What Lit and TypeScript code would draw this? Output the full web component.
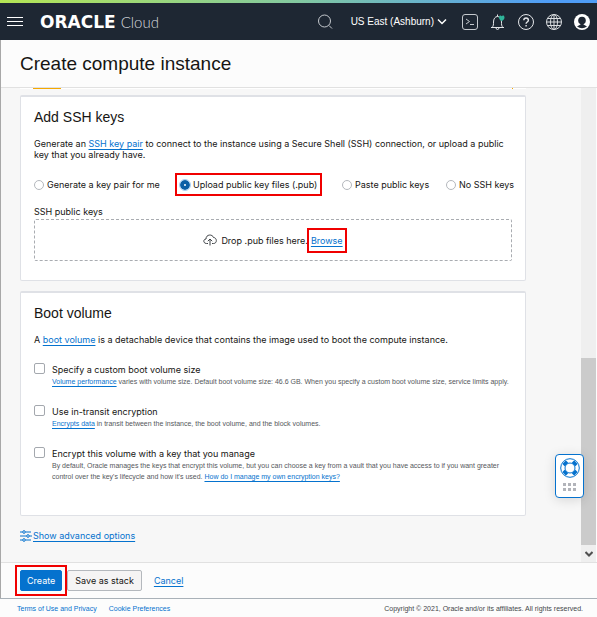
import { LitElement, html, css, svg } from "lit";
import { customElement, state } from "lit/decorators.js";

const spokes = [45, 135, 225, 315];
const dots = [0, 1, 2, 3, 4, 5];

@customElement("app-root")
export class AppRoot extends LitElement {
  @state() private source = "upload";

  static styles = css`
    :host {
      --ink: #161513;
      --link: #0572ce;
      --line: #dfe1e6;
      display: flex;
      flex-direction: column;
      min-height: 100vh;
      background: #fcfcfc;
      color: var(--ink);
      font: 9px/11px Inter, "Liberation Sans", Arial, sans-serif;
    }
    * { box-sizing: border-box; }
    h1, h2, p { margin: 0; font-weight: 400; }
    h1, h2 { font-family: "Liberation Sans", Arial, sans-serif; }
    svg { display: block; fill: none; }
    a { color: var(--link); text-decoration: underline; text-underline-offset: 2px; }
    button { font: inherit; cursor: pointer; }
    .rainbow { height: 3px; background: linear-gradient(90deg, #b5e655, #82c8a0 50%, #4f9df7 92%); }
    .top {
      display: flex;
      align-items: center;
      height: 37px;
      padding: 0 7px;
      background: #1e2733;
      color: #fff;
    }
    .bare { display: block; padding: 0; border: 0; background: none; color: inherit; }
    .brand { display: flex; align-items: center; margin-left: 17px; color: #fff; text-decoration: none; }
    .oracle { font: 700 17px/20px "DejaVu Sans", sans-serif; }
    .cloud { margin-left: 5px; font: 300 15px/20px Lato, sans-serif; color: #d5d8dc; }
    .tools { display: flex; align-items: center; gap: 12px; margin-left: auto; }
    .region {
      display: flex;
      align-items: center;
      gap: 3px;
      margin: 0 3px 0 6px;
      font: 10px/12px "Liberation Sans", Arial, sans-serif;
    }
    .page { display: flex; flex: 1; flex-direction: column; border-left: 1px solid #a8a8a8; }
    .title { padding: 12px 19px; border-bottom: 1px solid #e1e1e1; font-size: 19px; line-height: 23px; }
    .main { position: relative; display: grid; grid-template-columns: minmax(0, 1fr) 16px; flex: 1; background: #f7f7f7; }
    .content { padding: 0 55px 16px 19px; }
    .previous { display: flex; justify-content: space-between; height: 1px; padding: 0 13px; background: #fff; }
    .previous-left { width: 28px; background: #f5a800; }
    .previous-right { width: 1px; background: #f5a800; }
    .card {
      margin-top: 6px;
      padding: 11px 13px 19px;
      border: 1px solid var(--line);
      border-top-width: 2px;
      border-radius: 2px;
      background: #fff;
    }
    .card + .card { margin-top: 10px; padding-bottom: 33px; }
    h2 { margin-bottom: 12px; font-size: 14px; line-height: 18px; }
    .sources {
      display: grid;
      grid-template-columns: 146px 162px 104px auto;
      margin: 18px 0 15px;
      padding: 0;
      border: 0;
    }
    .source { display: flex; align-items: center; justify-self: start; gap: 3px; height: 13px; white-space: nowrap; }
    .marked { outline: 2px solid #f00000; }
    .source.marked { outline-offset: 3px; }
    input { appearance: none; margin: 0; flex: none; background: #fff; }
    input[type="radio"] { width: 10px; height: 10px; border: 1px solid #b4b8bd; border-radius: 50%; }
    input[type="radio"]:checked { border: 4px solid #0b5fa5; outline: 1px solid #a5cdf0; }
    .drop {
      display: flex;
      align-items: center;
      justify-content: center;
      height: 42px;
      margin-top: 2px;
      border: 1px dashed #a9acb1;
      border-radius: 2px;
    }
    .cloud-icon { margin-right: 4px; }
    .browse { margin-left: 3px; outline-offset: 2px; padding: 3px 0; }
    .option { display: grid; grid-template-columns: 11px 1fr; column-gap: 7px; margin-top: 18px; }
    .option label { line-height: 13px; }
    input[type="checkbox"] { width: 11px; height: 11px; border: 1px solid #a4a8ae; border-radius: 2px; }
    .hint { grid-column: 2; color: #55585c; font: 7px/11px "Liberation Sans", Arial, sans-serif; }
    .hint.long { white-space: nowrap; }
    .advanced { display: flex; align-items: center; gap: 1px; width: fit-content; margin-top: 14px; line-height: 12px; }
    .scroll { display: flex; flex-direction: column; border-right: 1px solid #fcfcfc; background: #efefef; }
    .track { flex: 270; }
    .thumb { flex: 187; background: #cbcbcb; }
    .arrow { display: grid; place-items: center; height: 17px; }
    .help {
      position: absolute;
      right: 13px;
      bottom: 64px;
      display: flex;
      flex-direction: column;
      align-items: center;
      gap: 5px;
      width: 29px;
      height: 44px;
      padding: 3px 0;
      border: 1px solid var(--link);
      border-radius: 4px;
      background: #fff;
      box-shadow: 0 2px 12px #0002;
    }
    .help-dots { fill: #b2b4ba; }
    .actions { display: flex; align-items: center; gap: 5px; padding: 7px 19px; border-top: 1px solid #e1e1e1; }
    .button { height: 21px; padding: 0 7px; border: 1px solid #b4b8bd; border-radius: 2px; background: #f5f4f4; color: var(--ink); }
    .primary { padding: 0 6px; border-color: var(--link); background: var(--link); color: #fff; }
    .step { display: flex; outline-offset: 3px; }
    .actions a { margin-left: 7px; }
    footer {
      display: flex;
      gap: 12px;
      padding: 4px 14px 3px 17px;
      border-top: 1px solid #a9b1b8;
      color: #44474a;
      font: 7px/11px "Liberation Sans", Arial, sans-serif;
    }
    footer a { text-decoration: none; }
    footer span { margin-left: auto; }
  `;

  private radio(id: string, label: string) {
    return html`<label class="source ${id === "upload" ? "marked" : ""}">
      <input type="radio" name="source" .checked=${this.source === id} @change=${() => (this.source = id)} />${label}
    </label>`;
  }

  render() {
    return html`
      <div class="rainbow"></div>
      <header class="top">
        <button class="bare" aria-label="Menu">
          <svg width="16" height="16" stroke="#fff"><path d="M0 3.500h16M0 7.500h16M0 11.500h16" /></svg>
        </button>
        <a class="brand" href="#home"><span class="oracle">ORACLE</span><span class="cloud">Cloud</span></a>
        <div class="tools">
          <button class="bare" aria-label="Search">
            <svg width="16" height="16" stroke="#c5c9ce"><circle cx="7.500" cy="7" r="6" /><path d="m12 11.500 3 3" /></svg>
          </button>
          <button class="bare region">
            US East (Ashburn)
            <svg width="10" height="8" stroke="#fff" stroke-width="1.500"><path d="m1 1.500 4 4 4-4" /></svg>
          </button>
          <button class="bare" aria-label="Cloud Shell">
            <svg width="16" height="16" stroke="#c5c9ce"><rect x=".5" y=".5" width="15" height="15" rx="2.500" /><path d="m4 5 3.500 2.500L4 10M8 10.500h4" /></svg>
          </button>
          <button class="bare" aria-label="Announcements">
            <svg width="16" height="16" stroke="#e4e6e9">
              <path d="M1 13.500h13M2 13.500c1.500-1.500 1.500-3 1.500-5.500 0-3 1.500-5.500 4-5.500s4 2.500 4 5.500c0 2.500 0 4 1.500 5.500M7.500 2.500V.5M6 14c0 2 3 2 3 0" />
              <path d="M9 3.500c0-2.500 2-2.500 2.700-1.300.7-1.200 2.800-1.200 2.800 1.300 0 1.500-1 2.500-2.700 3.800-1.800-1.300-2.800-2.300-2.800-3.800z" fill="#2fb59a" stroke="none" />
            </svg>
          </button>
          <button class="bare" aria-label="Help">
            <svg width="16" height="16" stroke="#e4e6e9"><circle cx="8" cy="8" r="7.500" /><path d="M5.800 6.300c0-3 4.600-3 4.600 0 0 1.700-2.300 1.700-2.300 3.400M8.100 11v1.500" stroke-width="1.400" /></svg>
          </button>
          <button class="bare" aria-label="Language">
            <svg width="16" height="16" stroke="#d9dcdf"><circle cx="8" cy="8" r="7.500" /><ellipse cx="8" cy="8" rx="3.500" ry="7.500" /><path d="M8 .5v15M.5 8h15M2 4.500h12M2 11.500h12" /></svg>
          </button>
          <button class="bare" aria-label="Profile">
            <svg width="16" height="16"><circle cx="8" cy="8" r="8" fill="#fff" /><circle cx="8" cy="6.500" r="3.800" fill="#1e2733" /><path d="M6.500 9h3v1.500l3.500 2q-5 3.500-10 0l3.500-2z" fill="#1e2733" /></svg>
          </button>
        </div>
      </header>

      <div class="page">
        <h1 class="title">Create compute instance</h1>
        <main class="main">
          <div class="content">
            <div class="previous"><span class="previous-left"></span><span class="previous-right"></span></div>
            <section class="card">
              <h2>Add SSH keys</h2>
              <p>Generate an <a href="#pair">SSH key pair</a> to connect to the instance using a Secure Shell (SSH) connection, or upload a public key that you already have.</p>
              <fieldset class="sources" aria-label="Key source">
                ${this.radio("generate", "Generate a key pair for me")}
                ${this.radio("upload", "Upload public key files (.pub)")}
                ${this.radio("paste", "Paste public keys")}
                ${this.radio("none", "No SSH keys")}
              </fieldset>
              <p>SSH public keys</p>
              <div class="drop">
                <svg class="cloud-icon" width="14" height="12" stroke="#3f4347">
                  <path d="M5 9.500H3.500C0 9.500 0 5 3 5c0-5 6.500-5 7.500-1.500 3.500 0 4 6 0 6H9M7 11.500V5M4.800 7.200 7 5l2.200 2.200" />
                </svg>
                <span>Drop .pub files here.</span>
                <a class="browse marked" href="#browse">Browse</a>
              </div>
            </section>

            <section class="card">
              <h2>Boot volume</h2>
              <p>A <a href="#boot">boot volume</a> is a detachable device that contains the image used to boot the compute instance.</p>
              <div class="option">
                <input type="checkbox" id="size" /><label for="size">Specify a custom boot volume size</label>
                <p class="hint long"><a href="#performance">Volume performance</a> varies with volume size. Default boot volume size: 46.6 GB. When you specify a custom boot volume size, service limits apply.</p>
              </div>
              <div class="option">
                <input type="checkbox" id="transit" /><label for="transit">Use in-transit encryption</label>
                <p class="hint"><a href="#encrypts">Encrypts data</a> in transit between the instance, the boot volume, and the block volumes.</p>
              </div>
              <div class="option">
                <input type="checkbox" id="key" /><label for="key">Encrypt this volume with a key that you manage</label>
                <p class="hint">By default, Oracle manages the keys that encrypt this volume, but you can choose a key from a vault that you have access to if you want greater control over the key's lifecycle and how it's used. <a href="#manage">How do I manage my own encryption keys?</a></p>
              </div>
            </section>
            <a class="advanced" href="#advanced">
              <svg width="12" height="12" stroke="#0572ce">
                <path d="M0 2h2.500M5.500 2H11M0 6h6.500M9.500 6H12M0 10h2.500M5.500 10H11" />
                <circle cx="4" cy="2" r="1.300" /><circle cx="8" cy="6" r="1.300" /><circle cx="4" cy="10" r="1.300" />
              </svg>
              <span>Show advanced options</span>
            </a>
          </div>
          <div class="scroll">
            <div class="track"></div>
            <div class="thumb"></div>
            <div class="arrow"><svg width="8" height="6" stroke="#505050" stroke-width="2"><path d="m.5 1 3.500 3.500L7.500 1" /></svg></div>
          </div>
          <button class="help" aria-label="Support">
            <svg width="20" height="20" viewBox="0 0 20 20" stroke="#0572ce">
              <circle cx="10" cy="10" r="9.300" /><circle cx="10" cy="10" r="5" />
              ${spokes.map((a) => svg`<path d="M10 1.700v3.200" stroke-width="5" transform="rotate(${a} 10 10)" />`)}
            </svg>
            <svg class="help-dots" width="13" height="8">
              ${dots.map((i) => svg`<rect x=${(i % 3) * 5} y=${Math.floor(i / 3) * 5} width="3" height="3" />`)}
            </svg>
          </button>
        </main>
        <div class="actions">
          <span class="step marked"><button class="button primary">Create</button></span>
          <button class="button">Save as stack</button>
          <a href="#cancel">Cancel</a>
        </div>
      </div>
      <footer>
        <a href="#terms">Terms of Use and Privacy</a>
        <a href="#cookies">Cookie Preferences</a>
        <span>Copyright © 2021, Oracle and/or its affiliates. All rights reserved.</span>
      </footer>
    `;
  }
}
